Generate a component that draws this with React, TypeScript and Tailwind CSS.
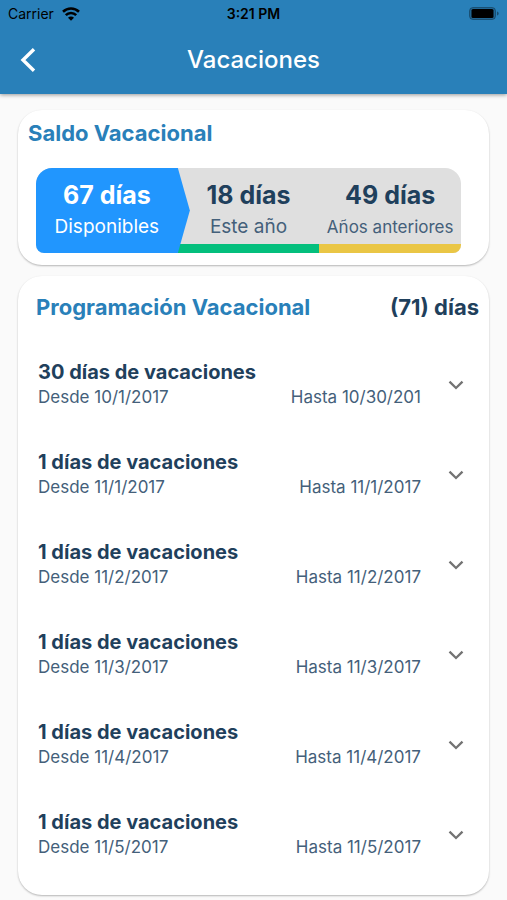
import React from 'react';
import clsx from 'clsx';

interface Balance {
  days: number;
  label: string;
  barClass: string;
  labelClass: string;
}

interface Vacation {
  days: number;
  from: string;
  to: string;
}

const AVAILABLE_DAYS = 67;

const balances: Balance[] = [
  { days: 18, label: 'Este año', barClass: 'bg-[#04bf7d]', labelClass: 'text-[19px]' },
  { days: 49, label: 'Años anteriores', barClass: 'bg-[#eac645]', labelClass: 'text-[17px]' },
];

const vacations: Vacation[] = [
  { days: 30, from: '10/1/2017', to: '10/30/201' },
  { days: 1, from: '11/1/2017', to: '11/1/2017' },
  { days: 1, from: '11/2/2017', to: '11/2/2017' },
  { days: 1, from: '11/3/2017', to: '11/3/2017' },
  { days: 1, from: '11/4/2017', to: '11/4/2017' },
  { days: 1, from: '11/5/2017', to: '11/5/2017' },
];

const WifiIcon = () => (
  <svg width="18" height="14" viewBox="0 0 18 14" fill="none" stroke="#000" strokeWidth="2.6" aria-hidden="true">
    <path d="M1 4.7a11.6 11.6 0 0 1 16 0" />
    <path d="M3.8 8.2a7.4 7.4 0 0 1 10.4 0" />
    <path d="M6 10.7a4.2 4.2 0 0 1 6 0L9 13.8z" fill="#000" stroke="none" />
  </svg>
);

const BatteryIcon = () => (
  <svg width="30" height="14" viewBox="0 0 30 14" aria-hidden="true">
    <rect x="0.5" y="0.5" width="26" height="12" rx="3.5" fill="#000" fillOpacity="0.2" stroke="#000" strokeOpacity="0.3" />
    <rect x="2.5" y="2" width="22" height="9" rx="1.5" fill="#000" />
    <path d="M28 4.5v4c1-.3 1.7-1.1 1.7-2S29 4.8 28 4.5z" fillOpacity="0.4" />
  </svg>
);

const StatusBar = () => (
  <div className="grid grid-cols-3 items-center h-7 px-2 text-sm leading-7 text-black">
    <div className="flex items-center gap-2">
      <span>Carrier</span>
      <WifiIcon />
    </div>
    <span className="text-center font-semibold">3:21 PM</span>
    <div className="flex justify-end">
      <BatteryIcon />
    </div>
  </div>
);

const Card: React.FC<{ className?: string; children: React.ReactNode }> = ({ className, children }) => (
  <section
    className={clsx('bg-white rounded-3xl shadow-[0_1px_2px_rgba(0,0,0,0.28)]', className)}
  >
    {children}
  </section>
);

const BalanceBar = () => (
  <div className="relative grid grid-cols-3 h-[85px] rounded-t-2xl rounded-b-lg overflow-hidden bg-[#dfdfdf] text-center text-[#1f405c]">
    <svg
      className="absolute inset-y-0 left-0 w-[36.2%] h-full"
      viewBox="0 0 154 85"
      preserveAspectRatio="none"
      aria-hidden="true"
    >
      <path d="M0 0H142L154 42.5L142 85H0z" fill="#2196fe" />
    </svg>
    <div className="relative pt-[11px] text-white">
      <p className="text-[25px] leading-8 font-bold">{AVAILABLE_DAYS} días</p>
      <p className="text-[19px] leading-8">Disponibles</p>
    </div>
    {balances.map((b) => (
      <div key={b.label} className="flex flex-col justify-between pt-[11px]">
        <div>
          <p className="text-[25px] leading-8 font-bold">{b.days} días</p>
          <p className={clsx('leading-8 whitespace-nowrap text-[#44607a]', b.labelClass)}>{b.label}</p>
        </div>
        <div className={clsx('h-[9px] -mt-1 shrink-0', b.barClass)} />
      </div>
    ))}
  </div>
);

const VacationRow: React.FC<{ vacation: Vacation }> = ({ vacation }) => (
  <li>
    <button type="button" className="flex w-full items-center py-5 pl-5 pr-[22px] text-left">
      <span className="flex-1">
        <span className="block text-xl leading-6 font-bold text-[#1f405c]">
          {vacation.days} días de vacaciones
        </span>
        <span className="flex justify-between text-[17px] leading-[26px] text-[#44607a]">
          <span>Desde {vacation.from}</span>
          <span>Hasta {vacation.to}</span>
        </span>
      </span>
      <svg className="ml-6" width="22" height="22" viewBox="0 0 22 22" fill="none" stroke="#737373" strokeWidth="2.3" aria-hidden="true">
        <path d="M4.5 7.6L11 14L17.5 7.6" />
      </svg>
    </button>
  </li>
);

export default function App() {
  return (
    <div className="min-h-screen bg-[#fafafa] font-[Inter,sans-serif]">
      <header className="bg-[#2980b9] shadow-[0_1px_4px_rgba(0,0,0,0.4)]">
        <StatusBar />
        <div className="grid grid-cols-[56px_1fr_56px] items-center h-[66px] pb-[2px]">
          <button type="button" aria-label="Volver" className="flex justify-center">
            <svg width="24" height="28" viewBox="0 0 24 28" fill="none" stroke="#fff" strokeWidth="3.4" aria-hidden="true">
              <path d="M18 3.2L7 14L18 24.8" />
            </svg>
          </button>
          <h1 className="text-center text-2xl font-medium text-white">Vacaciones</h1>
        </div>
      </header>

      <main className="flex flex-col gap-[11px] px-[18px] pt-4 pb-1">
        <Card className="pt-[7px] pb-3">
          <h2 className="pl-[10px] text-[22px] leading-8 font-bold text-[#2980b9]">Saldo Vacacional</h2>
          <div className="pt-[19px] pl-[18px] pr-7">
            <BalanceBar />
          </div>
        </Card>

        <Card className="pt-[15px] pb-[15px]">
          <div className="flex justify-between pl-[18px] pr-[10px] pb-[17px] text-[22px] leading-8 font-bold">
            <h2 className="text-[#2980b9]">Programación Vacacional</h2>
            <span className="text-[#1f405c]">(71) días</span>
          </div>
          <ul>
            {vacations.map((v) => (
              <VacationRow key={v.from} vacation={v} />
            ))}
          </ul>
        </Card>
      </main>
    </div>
  );
}
